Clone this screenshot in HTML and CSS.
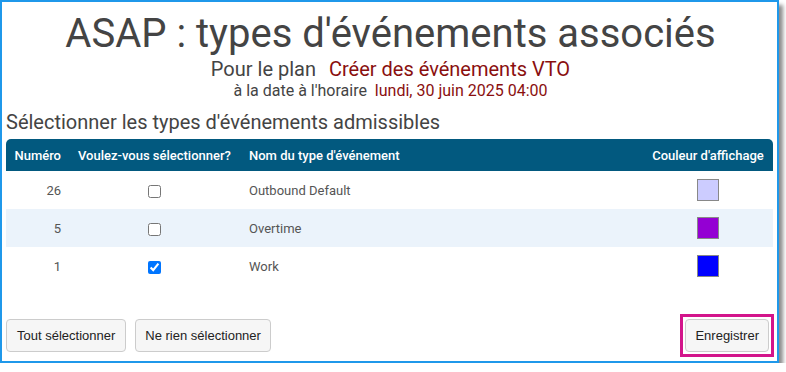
FILE: index.html
```html
<!DOCTYPE html>
<html lang="fr">
<head>
<meta charset="utf-8">
<link rel="stylesheet" href="styles.css">
</head>
<body>
<div class="frame">
  <h1 class="title">ASAP : types d'événements associés</h1>
  <div class="sub">Pour le plan <span class="hl">Créer des événements VTO</span></div>
  <div class="sub2">à la date à l'horaire <span class="hl hl2">lundi, 30 juin 2025 04:00</span></div>
  <h2 class="section">Sélectionner les types d'événements admissibles</h2>
  <table class="grid">
    <thead>
      <tr>
        <th class="c-num">Numéro</th>
        <th class="c-sel">Voulez-vous sélectionner?</th>
        <th class="c-name">Nom du type d'événement</th>
        <th class="c-col">Couleur d'affichage</th>
      </tr>
    </thead>
    <tbody>
      <tr>
        <td class="c-num">26</td>
        <td class="c-chk"><input type="checkbox"></td>
        <td class="c-name">Outbound Default</td>
        <td class="c-col"><span class="swatch sw-lav"></span></td>
      </tr>
      <tr class="alt">
        <td class="c-num">5</td>
        <td class="c-chk"><input type="checkbox"></td>
        <td class="c-name">Overtime</td>
        <td class="c-col"><span class="swatch sw-vio"></span></td>
      </tr>
      <tr>
        <td class="c-num">1</td>
        <td class="c-chk"><input type="checkbox" checked></td>
        <td class="c-name">Work</td>
        <td class="c-col"><span class="swatch sw-blue"></span></td>
      </tr>
    </tbody>
  </table>
  <div class="actions">
    <div class="left">
      <button class="btn">Tout sélectionner</button>
      <button class="btn">Ne rien sélectionner</button>
    </div>
    <div class="mark"><button class="btn">Enregistrer</button></div>
  </div>
</div>
</body>
</html>
```
FILE: styles.css
```css
html, body { margin: 0; padding: 0; background: #fff; }
body { font-family: Roboto, "Liberation Sans", sans-serif; color: #444; }
.frame {
  width: 769px;
  height: 359px;
  border: 2px solid #1f98ea;
  padding: 0 2px 0 4px;
  box-shadow: 4px 5px 4px rgba(0,0,0,0.45);
  display: flex;
  flex-direction: column;
}
.title {
  margin: 9px 0 0;
  font-size: 40px;
  font-weight: 400;
  line-height: 46px;
  text-align: center;
  color: #444;
}
.sub { text-align: center; font-size: 20px; line-height: 24px; }
.sub2 { text-align: center; font-size: 16px; line-height: 20px; }
.hl { color: #8a0f0f; margin-left: 8px; }
.hl2 { margin-left: 4px; }
.section { margin: 9px 0 5px; font-size: 20px; font-weight: 400; line-height: 24px; color: #444; }
.grid { border-collapse: collapse; width: 767px; font-size: 13px; }
.grid thead th {
  background: #02597f;
  color: #fff;
  font-weight: 500;
  height: 32px;
  padding: 0 8px;
  text-align: left;
}
.grid thead th:first-child { border-top-left-radius: 5px; }
.grid thead th:last-child { border-top-right-radius: 5px; }
.grid td { height: 38px; padding: 0 8px; color: #555; }
.grid tr.alt td { background: #ebf3fb; }
.grid .c-num { text-align: right; width: 47px; }
.grid th.c-sel { width: 154px; }
.grid th.c-sel, .grid th.c-name { padding-left: 9px; }
.grid .c-name { padding-left: 9px; }
.grid .c-chk { text-align: center; }
.grid .c-chk input { margin: 0; width: 13px; height: 13px; vertical-align: middle; }
.grid .c-col { text-align: center; width: 114px; }
.swatch { display: inline-block; width: 20px; height: 20px; border: 1px solid #888; vertical-align: middle; }
.sw-lav { background: #ccccff; }
.sw-vio { background: #9400d3; }
.sw-blue { background: #0000ff; }
.actions { margin-top: auto; margin-bottom: 4px; display: flex; justify-content: space-between; align-items: center; }
.left { display: flex; gap: 9px; }
.btn {
  font-family: "Liberation Sans", Arial, sans-serif;
  font-size: 13px;
  color: #222;
  background: #f6f6f6;
  border: 1px solid #ccc;
  border-radius: 4px;
  height: 33px;
  padding: 0 9px;
}
.left .btn:first-child { padding: 0 10px; }
.mark { border: 3px solid #d3158b; padding: 2px; margin-right: 1px; display: flex; }
.mark .btn { padding: 0 9px; }
```
